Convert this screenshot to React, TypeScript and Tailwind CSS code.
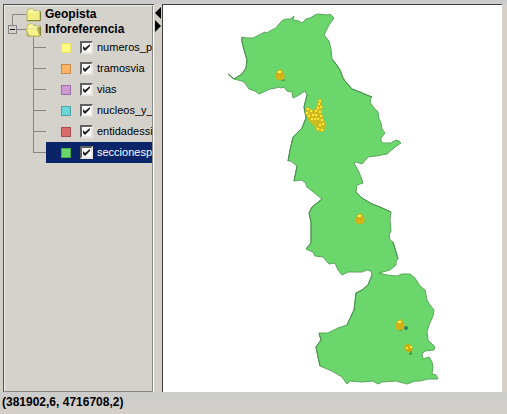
import React, { useState } from 'react';

type Layer = { name: string; color: string; edge: string };

const layers: Layer[] = [
  { name: 'numeros_policia', color: '#ffff80', edge: '#e2e26c' },
  { name: 'tramosvia', color: '#ffb366', edge: '#c98a4c' },
  { name: 'vias', color: '#cc99d6', edge: '#9f70a8' },
  { name: 'nucleos_y_diseminados', color: '#6bd6d6', edge: '#4ba5a5' },
  { name: 'entidadessingulares', color: '#db6b6b', edge: '#a84d4d' },
  { name: 'seccionespoligono', color: '#6bd66b', edge: '#4ca84c' },
];

const region =
  'M228 74L234 79L242 74L246 68L247 60L244 50L242 42L242 37L246 38L253 38L259 35L265 32L267 33L270 31L276 28L279 24L283 20L287 19L291 19L294 16L293 20L299 21L302 23L306 19L310 18L315 15L318 14L328 15L330 14L334 18L329 25L324 35L329 41L331 49L332 59L336 64L340 70L343 78L345 81L352 89L360 92L366 95L372 97L370 99L371 104L375 109L378 112L379 119L381 123L382 129L385 133L381 138L381 141L383 143L391 143L396 140L399 141L401 143L395 147L387 154L376 156L368 157L362 164L356 162L354 163L359 172L363 183L357 185L356 192L362 198L372 204L380 207L391 212L390 220L391 231L389 235L390 240L393 242L396 252L398 259L396 261L396 265L390 270L379 273L387 275L397 276L402 274L410 274L415 278L420 286L425 290L427 300L430 305L434 310L433 316L429 325L427 332L428 340L435 347L434 350L425 351L422 354L423 359L429 357L432 362L433 367L432 374L436 375L438 379L428 379L420 381L415 381L407 384L396 381L382 382L378 384L373 381L362 382L350 381L347 384L342 377L332 371L320 366L318 357L316 347L321 340L319 333L328 333L338 328L347 325L354 310L356 293L362 290L368 285L372 275L371 271L367 270L362 272L355 272L348 272L342 275L338 270L335 263L329 264L323 257L315 256L313 252L306 249L311 243L311 222L309 213L312 207L322 199L317 195L307 187L305 182L301 180L294 181L297 166L291 161L288 161L290 150L293 137L302 128L306 118L304 107L307 95L305 91L299 95L293 98L292 92L287 91L284 87L281 88L278 87L276 88L270 89L259 94L255 91L249 89L245 83L242 81L234 79Z';

const cluster = [
  [320, 101], [319, 104], [321, 107], [318, 108], [316, 111], [320, 112], [308, 109],
  [307, 113], [311, 111], [313, 115], [309, 116], [316, 115], [321, 116], [322, 120],
  [312, 119], [318, 119], [323, 124], [315, 119], [320, 125], [318, 129], [322, 130],
];

function Marker({ x, y }: { x: number; y: number }) {
  return (
    <g>
      <path d={`M${x - 5} ${y + 1}l2-5 3-2 3 2 2 5-2 4h-6z`} fill="#ccb41c" />
      <path d={`M${x - 4} ${y}h2m1-1h2m-4 3h2m1-1h2`} stroke="#e6a000" />
      <path d={`M${x - 2} ${y - 4}h3v2h-3z`} fill="#fff45c" />
    </g>
  );
}

function Folder({ open = false }: { open?: boolean }) {
  return (
    <svg width="17" height="14" viewBox="0 0 17 14" className="shrink-0" aria-hidden="true">
      <path d="M1 3l2-2h4l2 2h5v10H1z" fill="#f1ef82" stroke="#b4b15a" />
      <path d="M3 2h4M2 4h11" stroke="#fffdc0" />
      <path d="M14.500 3.500v9h-13" fill="none" stroke="#85833b" />
      {open && (
        <>
          <path d="M0 6h11l3 7H3z" fill="#f6f488" stroke="#b4b15a" />
          <path d="M11 4h3v8z" fill="#a6a34e" />
          <path d="M1 6h10" stroke="#fffdc8" />
        </>
      )}
    </svg>
  );
}

function LayerRow({ layer, last }: { layer: Layer; last: boolean }) {
  const [on, setOn] = useState(true);
  return (
    <li className="flex h-[21px]">
      <span className="w-7 shrink-0" />
      <span className="flex w-[13px] shrink-0 flex-col">
        <span className="h-[11px] shrink-0 border-b border-l border-[#858585]" />
        <span className={last ? 'grow' : 'grow border-l border-[#858585]'} />
      </span>
      <label
        className={
          last
            ? 'flex min-w-0 grow items-center bg-[#0a246a] pl-[15px] text-white'
            : 'flex min-w-0 grow items-center pl-[15px] text-black'
        }
      >
        <span className="size-[10px] shrink-0 border" style={{ backgroundColor: layer.color, borderColor: layer.edge }} />
        <span className="ml-[9px] grid size-[13px] shrink-0">
          <input
            type="checkbox"
            checked={on}
            onChange={() => setOn(!on)}
            className="peer col-start-1 row-start-1 size-[13px] appearance-none border-2 border-t-[#606060] border-r-[#e8e5df] border-b-[#e8e5df] border-l-[#606060] bg-white"
          />
          <svg viewBox="0 0 13 13" className="pointer-events-none invisible col-start-1 row-start-1 size-[13px] peer-checked:visible" aria-hidden="true">
            <path d="M3 5l2 2 5-4v2L5 10 3 8z" fill="#222" />
          </svg>
        </span>
        <span className="ml-1 text-[11px] leading-[21px] whitespace-nowrap">{layer.name}</span>
      </label>
    </li>
  );
}

export default function App() {
  const [expanded, setExpanded] = useState(true);
  const [treeShown, setTreeShown] = useState(true);
  return (
    <div className="flex h-screen flex-col bg-[#d4d0c8] font-['Liberation_Sans',Arial,sans-serif] text-black">
      <div className="h-1 shrink-0 bg-[#cccccc]" />
      <main className="flex min-h-0 grow pr-[5px] pl-[3px]">
        {treeShown && (
          <nav aria-label="Capas" className="flex w-[151px] shrink-0 border-t border-l border-[#505050] bg-[#d5d2cc]">
            <div className="min-w-0 grow overflow-hidden border border-t-[#eeeeea] border-r-[#858585] border-b-[#858585] border-l-[#eeeeea] pt-px">
              <div className="flex h-[15px] items-center text-[12px] font-bold">
                <svg width="20" height="15" className="ml-px shrink-0" aria-hidden="true">
                  <path d="M6.500 15V7.500H20" fill="none" stroke="#858585" />
                </svg>
                <Folder />
                <span className="ml-[2px] leading-[15px]">Geopista</span>
              </div>
              <div className="flex h-[15px] items-center text-[12px] font-bold">
                <button type="button" aria-label="Inforeferencia" aria-expanded={expanded} onClick={() => setExpanded(!expanded)} className="ml-px shrink-0">
                  <svg width="20" height="15" className="block" aria-hidden="true">
                    <path d="M6.500 0V4M11 7.500H20" stroke="#858585" />
                    <rect x="2.500" y="3.500" width="8" height="8" fill="#d5d2cc" stroke="#858585" />
                    <path d="M4 7.500h5" stroke="#000" />
                  </svg>
                </button>
                <Folder open />
                <span className="ml-[2px] leading-[15px]">Inforeferencia</span>
              </div>
              {expanded && (
                <ul>
                  {layers.map((layer, i) => (
                    <LayerRow key={layer.name} layer={layer} last={i === layers.length - 1} />
                  ))}
                </ul>
              )}
            </div>
            <div className="w-px shrink-0 bg-white" />
          </nav>
        )}
        <div className="flex w-2 shrink-0 flex-col gap-px pt-[3px]">
          <button type="button" aria-label="Ocultar capas" onClick={() => setTreeShown(false)}>
            <svg width="8" height="12" className="block" aria-hidden="true">
              <path d="M7 0v12L1 6z" />
            </svg>
          </button>
          <button type="button" aria-label="Mostrar capas" onClick={() => setTreeShown(true)}>
            <svg width="8" height="12" className="block" aria-hidden="true">
              <path d="M1 0v12l6-6z" />
            </svg>
          </button>
        </div>
        <section aria-label="Mapa" className="min-w-0 grow overflow-hidden border-t border-l border-[#404040] bg-white">
          <svg viewBox="163 5 339 387" preserveAspectRatio="xMidYMid meet" className="block size-full" aria-hidden="true">
            <path d={region} fill="#6bd66b" stroke="#5aa65a" strokeWidth="1" strokeLinejoin="round" />
            <path d="M228 74l6 5 8-5 4-6 1-8-3-10-2-8v-5M288 161l2-11 3-13 9-9 4-10-2-11 3-12M294 181l3-15M306 249l5-6v-21l-2-9 3-6 10-8M320 366l-2-9-2-10 5-7-2-7M347 325l7-15 2-17 6-3 6-5 4-10M332 59l4 5 4 6 3 8 2 3 7 8 8 3 12 5M356 192l6 6 10 6 8 3 11 5M393 242l3 10 2 7" fill="none" stroke="#48924c" />
            <path d="M281 80h4M399 330h3M409 354h3" stroke="#52602a" strokeWidth="1" />
            <Marker x={280} y={75} />
            <path d="M318 104l3-2 1 7-1 6 3 5 2 4-2 7-5 1-4-5-6-6-4-8 2-4 6 3z" fill="#c7bc23" />
            {cluster.map(([x, y]) => (
              <g key={`${x}-${y}`}>
                <circle cx={x} cy={y} r="2" fill="#d6b91b" />
                <rect x={x - 1} y={y - 1} width="2" height="2" fill="#ffe838" />
              </g>
            ))}
            <Marker x={360} y={219} />
            <Marker x={400} y={325} />
            <circle cx="406" cy="328" r="2" fill="#258468" />
            <path d="M404 347l3-3 4 1 2 4-3 4-5-3z" fill="#d1ac08" />
            <path d="M406 347h2v2h-2zM410 346h2v2h-2z" fill="#ffef4c" />
            <path d="M411 351v3" stroke="#388138" />
          </svg>
        </section>
      </main>
      <footer className="h-[22px] shrink-0 bg-gradient-to-b from-[#cccccc] to-[#d4d0c8] pl-[2px] text-[12px] leading-[20px] font-bold">
        (381902,6, 4716708,2)
      </footer>
    </div>
  );
}
